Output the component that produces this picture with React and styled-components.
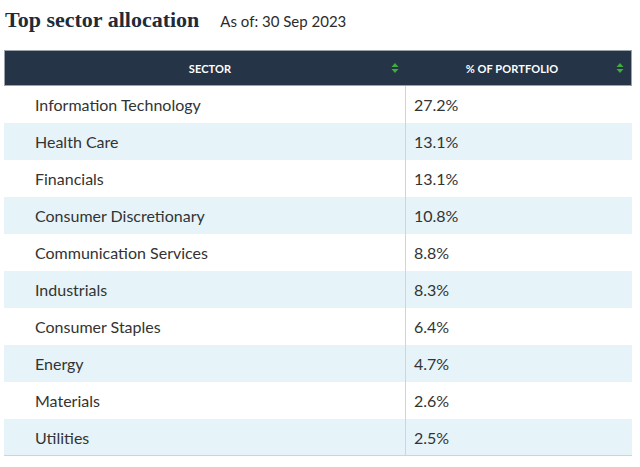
import React from "react";
import styled, { createGlobalStyle } from "styled-components";

const Global = createGlobalStyle`
  html, body { margin: 0; padding: 0; background: #fff; }
  body { font-family: "Lato", "Open Sans", sans-serif; }
`;

const Page = styled.div`
  width: 640px;
  height: 467px;
  padding: 7px 8px 0 4px;
  box-sizing: border-box;
  overflow: hidden;
`;

const TitleRow = styled.div`
  display: flex;
  align-items: baseline;
  gap: 21px;
  padding-left: 1px;
  height: 43px;
`;

const Title = styled.h2`
  margin: 0;
  font-family: "Liberation Serif", serif;
  font-weight: 700;
  font-size: 22px;
  color: #1e2b3a;
`;

const AsOf = styled.span`
  font-size: 15px;
  color: #2b2b2b;
`;

const Table = styled.div`
  display: grid;
  grid-template-columns: 401px 1fr;
`;

const HeadCell = styled.div`
  position: relative;
  height: 36px;
  background: #253446;
  border-top: 1px solid #9aa3ad;
  border-bottom: 1px solid #9aa3ad;
  border-left: ${(p) => (p.$first ? "1px solid #9aa3ad" : "none")};
  border-right: ${(p) => (p.$last ? "1px solid #9aa3ad" : "none")};
  box-sizing: border-box;
  display: flex;
  align-items: center;
  justify-content: center;
  padding-left: ${(p) => (p.$first ? "10px" : "0")};
  padding-right: ${(p) => (p.$last ? "12px" : "0")};
  color: #fff;
  font-size: 11px;
  font-weight: 700;
  letter-spacing: 0.1px;
`;

const SortIcon = styled.svg`
  position: absolute;
  right: ${(p) => p.$right}px;
  top: 50%;
  transform: translateY(-50%);
`;

const Cell = styled.div`
  height: 37px;
  display: flex;
  align-items: center;
  background: ${(p) => (p.$alt ? "#e6f3f8" : "#fff")};
  font-size: 16px;
  color: #333;
  padding-left: ${(p) => (p.$num ? "8px" : "31px")};
  border-left: ${(p) => (p.$num ? "1px solid #cfd4d8" : "none")};
  border-bottom: ${(p) => (p.$lastRow ? "1px solid #cfd4d8" : "none")};
  box-sizing: border-box;
`;

const Sort = ({ right }) => (
  <SortIcon $right={right} width="8" height="12" viewBox="0 0 8 12">
    <path d="M4 1 L7.5 5 L0.5 5 Z" fill="#3fae3a" />
    <path d="M4 11 L7.5 7 L0.5 7 Z" fill="#3fae3a" />
  </SortIcon>
);

const rows = [
  ["Information Technology", "27.2%"],
  ["Health Care", "13.1%"],
  ["Financials", "13.1%"],
  ["Consumer Discretionary", "10.8%"],
  ["Communication Services", "8.8%"],
  ["Industrials", "8.3%"],
  ["Consumer Staples", "6.4%"],
  ["Energy", "4.7%"],
  ["Materials", "2.6%"],
  ["Utilities", "2.5%"],
];

export default function App() {
  return (
    <>
      <Global />
      <Page>
        <TitleRow>
          <Title>Top sector allocation</Title>
          <AsOf>As of: 30 Sep 2023</AsOf>
        </TitleRow>
        <Table>
          <HeadCell $first>
            SECTOR
            <Sort right={6} />
          </HeadCell>
          <HeadCell $last>
            % OF PORTFOLIO
            <Sort right={7} />
          </HeadCell>
          {rows.map(([name, pct], i) => (
            <React.Fragment key={name}>
              <Cell $alt={i % 2 === 1} $lastRow={i === rows.length - 1}>{name}</Cell>
              <Cell $num $alt={i % 2 === 1} $lastRow={i === rows.length - 1}>{pct}</Cell>
            </React.Fragment>
          ))}
        </Table>
      </Page>
    </>
  );
}
